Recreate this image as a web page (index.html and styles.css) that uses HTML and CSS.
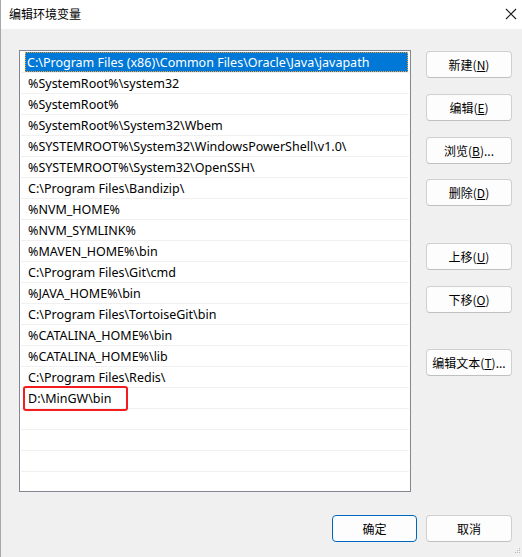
FILE: index.html
```html
<!DOCTYPE html>
<html lang="zh-CN">
<head>
<meta charset="utf-8">
<title>编辑环境变量</title>
<link rel="stylesheet" href="styles.css">
</head>
<body>
<div class="window">
  <div class="titlebar">
    <span class="title">编辑环境变量</span>
    <svg class="close" width="12" height="12" viewBox="0 0 12 12"><path d="M1 1 L11 11 M11 1 L1 11" stroke="#1a1a1a" stroke-width="1.1" fill="none"/></svg>
  </div>
  <div class="content">
    <div class="main">
      <div class="list">
        <div class="row selected"><span class="cell">C:\Program Files (x86)\Common Files\Oracle\Java\javapath</span></div>
        <div class="row"><span class="cell">%SystemRoot%\system32</span></div>
        <div class="row"><span class="cell">%SystemRoot%</span></div>
        <div class="row"><span class="cell">%SystemRoot%\System32\Wbem</span></div>
        <div class="row"><span class="cell">%SYSTEMROOT%\System32\WindowsPowerShell\v1.0\</span></div>
        <div class="row"><span class="cell">%SYSTEMROOT%\System32\OpenSSH\</span></div>
        <div class="row"><span class="cell">C:\Program Files\Bandizip\</span></div>
        <div class="row"><span class="cell">%NVM_HOME%</span></div>
        <div class="row"><span class="cell">%NVM_SYMLINK%</span></div>
        <div class="row"><span class="cell">%MAVEN_HOME%\bin</span></div>
        <div class="row"><span class="cell">C:\Program Files\Git\cmd</span></div>
        <div class="row"><span class="cell">%JAVA_HOME%\bin</span></div>
        <div class="row"><span class="cell">C:\Program Files\TortoiseGit\bin</span></div>
        <div class="row"><span class="cell">%CATALINA_HOME%\bin</span></div>
        <div class="row"><span class="cell">%CATALINA_HOME%\lib</span></div>
        <div class="row"><span class="cell">C:\Program Files\Redis\</span></div>
        <div class="row"><span class="cell">D:\MinGW\bin</span></div>
        <div class="row"></div>
        <div class="row"></div>
        <div class="row"></div>
        <div class="row"></div>
        <div class="highlight"></div>
      </div>
      <div class="side">
        <button class="btn">新建(<u>N</u>)</button>
        <button class="btn gap-s">编辑(<u>E</u>)</button>
        <button class="btn gap-s">浏览(<u>B</u>)...</button>
        <button class="btn gap-t">删除(<u>D</u>)</button>
        <button class="btn gap-l">上移(<u>U</u>)</button>
        <button class="btn gap-s">下移(<u>O</u>)</button>
        <button class="btn gap-l2">编辑文本(<u>T</u>)...</button>
      </div>
    </div>
    <div class="footer">
      <button class="btn default">确定</button>
      <button class="btn">取消</button>
    </div>
  </div>
  <svg class="grip" width="8" height="8" viewBox="0 0 8 8"><g fill="#b8b8b8"><rect x="6" y="0" width="1" height="1"/><rect x="4" y="2" width="1" height="1"/><rect x="6" y="2" width="1" height="1"/><rect x="2" y="4" width="1" height="1"/><rect x="4" y="4" width="1" height="1"/><rect x="6" y="4" width="1" height="1"/></g></svg>
</div>
</body>
</html>
```
FILE: styles.css
```css
* { box-sizing: border-box; }
html, body { margin: 0; padding: 0; }
body {
  width: 522px;
  height: 557px;
  overflow: hidden;
  font-family: "Noto Sans", "Noto Sans CJK SC", sans-serif;
  font-size: 12px;
  color: #000;
  background: #f0f0f0;
}
.window {
  position: relative;
  width: 522px;
  height: 557px;
  display: flex;
  flex-direction: column;
  background: #f0f0f0;
  border-left: 1px solid #a8a8a8;
}
.titlebar {
  height: 29px;
  flex: none;
  background: #fff;
  display: flex;
  align-items: center;
  justify-content: space-between;
  padding: 0 5px 2px 8px;
}
.title {
  font-family: "Noto Sans CJK SC", sans-serif;
  font-size: 12px;
}
.close { margin-top: 1px; }
.content {
  flex: 1;
  display: flex;
  flex-direction: column;
  padding: 21px 10px 0 18px;
}
.main {
  display: flex;
  gap: 15px;
}
.list {
  position: relative;
  width: 392px;
  height: 442px;
  border: 1px solid #828790;
  background: #fff;
  overflow: hidden;
  padding: 1px 1px 0 1px;
  font-size: 12.5px;
}
.row {
  height: 21px;
  border-bottom: 1px solid #f0f0f0;
  display: flex;
  line-height: 19px;
}
.cell {
  margin-left: 4px;
  padding-left: 2px;
  height: 20px;
  white-space: nowrap;
  border: 1px solid transparent;
}
.selected .cell {
  flex: 1;
  background: #0078d7;
  color: #fff;
  border: 1px dotted #f5a033;
  padding-left: 1px;
  margin-right: 1px;
}
.highlight {
  position: absolute;
  left: 3px;
  top: 335px;
  width: 105px;
  height: 25px;
  border: 2px solid #f41d1d;
  border-radius: 3px;
}
.side {
  display: flex;
  flex-direction: column;
  padding-top: 1px;
}
.btn {
  width: 86px;
  height: 27px;
  background: #fdfdfd;
  border: 1px solid #d0d0d0;
  border-bottom-color: #c0c0c0;
  border-radius: 4px;
  font-family: "Noto Sans CJK SC", sans-serif;
  font-size: 12px;
  color: #000;
  padding: 0;
  line-height: 23px;
}
.btn u { text-underline-offset: 1px; }
.gap-s { margin-top: 16px; }
.gap-t { margin-top: 15px; }
.gap-l { margin-top: 37px; }
.gap-l2 { margin-top: 36px; }
.footer {
  display: flex;
  justify-content: flex-end;
  gap: 9px;
  margin-top: 23px;
}
.default {
  width: 85px;
  border: 1px solid #0067c0;
}
.grip {
  position: absolute;
  right: 1px;
  bottom: 1px;
}
```
